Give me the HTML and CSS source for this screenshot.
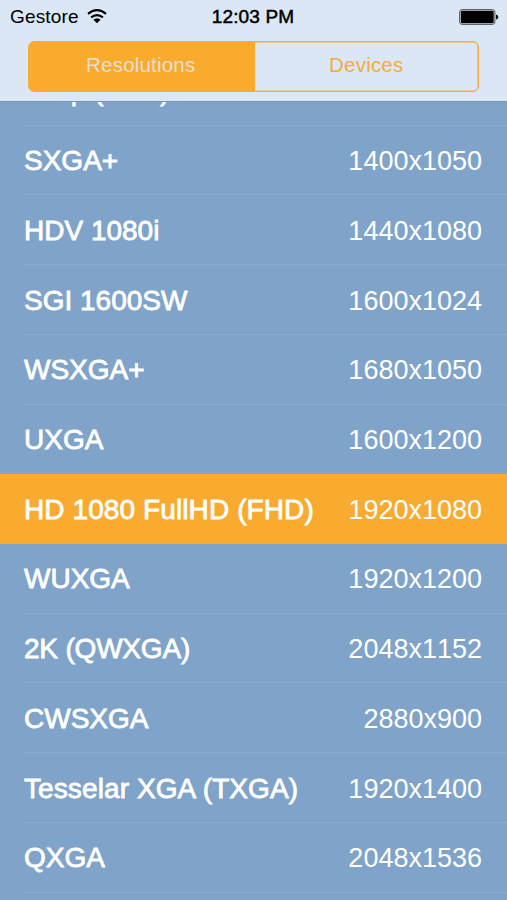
FILE: index.html
```html
<!DOCTYPE html>
<html lang="en">
<head>
<meta charset="utf-8">
<title>Resolutions</title>
<link rel="stylesheet" href="styles.css">
</head>
<body>
<div class="screen">
  <header class="header">
    <div class="status">
      <div class="carrier"><span>Gestore</span>
        <svg class="wifi" width="20" height="15" viewBox="0 0 20 15">
          <path d="M1 4.8Q10-2.4 19 4.8" fill="none" stroke="#000" stroke-width="2.2"/>
          <path d="M4.1 8.4Q10 3.8 15.9 8.4" fill="none" stroke="#000" stroke-width="2.2"/>
          <path d="M6.4 10.8Q10 7.6 13.6 10.8L10 14.2Z"/>
        </svg>
      </div>
      <div class="clock">12:03 PM</div>
      <svg class="battery" width="40" height="16" viewBox="0 0 40 16">
        <rect x=".6" y=".6" width="35.3" height="14.8" rx="2.5" fill="none" stroke="#4f5458" stroke-width="1"/>
        <rect x="1.8" y="1.8" width="32.9" height="12.4" rx="1.2"/>
        <path d="M37 5.5Q39.3 6 39.3 8Q39.3 10 37 10.5Z"/>
      </svg>
    </div>
    <nav class="tabs">
      <div class="tab active"><span>Resolutions</span></div>
      <div class="tab"><span>Devices</span></div>
    </nav>
  </header>
  <main class="viewport">
    <div class="list">
      <div class="row"><span class="name">900p (HD+)</span><span class="value">1600x900</span></div>
      <div class="row"><span class="name">SXGA+</span><span class="value">1400x1050</span></div>
      <div class="row"><span class="name">HDV 1080i</span><span class="value">1440x1080</span></div>
      <div class="row"><span class="name">SGI 1600SW</span><span class="value">1600x1024</span></div>
      <div class="row"><span class="name">WSXGA+</span><span class="value">1680x1050</span></div>
      <div class="row"><span class="name">UXGA</span><span class="value">1600x1200</span></div>
      <div class="row selected"><span class="name">HD 1080 FullHD (FHD)</span><span class="value">1920x1080</span></div>
      <div class="row"><span class="name">WUXGA</span><span class="value">1920x1200</span></div>
      <div class="row"><span class="name tight">2K (QWXGA)</span><span class="value">2048x1152</span></div>
      <div class="row"><span class="name">CWSXGA</span><span class="value">2880x900</span></div>
      <div class="row"><span class="name loose">Tesselar XGA (TXGA)</span><span class="value">1920x1400</span></div>
      <div class="row"><span class="name">QXGA</span><span class="value">2048x1536</span></div>
    </div>
  </main>
</div>
</body>
</html>
```
FILE: styles.css
```css
* { box-sizing: border-box; }
body {
  margin: 0;
  font-family: "Liberation Sans", Arial, sans-serif;
  background: #7fa3c9;
}
.screen {
  width: 507px;
  height: 900px;
  display: flex;
  flex-direction: column;
  overflow: hidden;
}
.header {
  flex: none;
  height: 102px;
  background: #dbe7f4;
  border-bottom: 1px solid #7594b6;
}
.status {
  display: grid;
  grid-template-columns: 1fr auto 1fr;
  align-items: center;
  height: 33px;
  padding: 0 8px 0 10px;
  font-size: 19px;
  color: #000;
}
.carrier { display: flex; align-items: center; gap: 8px; }
.carrier span { letter-spacing: .15px; }
.wifi { margin-top: -1px; }
.clock { -webkit-text-stroke: .5px #000; letter-spacing: .15px; margin-left: -3px; }
.battery { justify-self: end; }
.tabs {
  display: flex;
  width: 451px;
  height: 51px;
  margin: 8px 0 0 28px;
  border: 1px solid #f3ac40;
  border-radius: 6px;
  box-shadow: inset 0 0 0 .5px #f3ac40;
  overflow: hidden;
}
.tab {
  flex: 1;
  display: flex;
  align-items: center;
  justify-content: center;
  padding-bottom: 3px;
  font-size: 20.5px;
  letter-spacing: .2px;
  color: #f3ac40;
}
.active { background: #f9ab30; color: #eadfce; padding-right: 2px; }
.viewport { flex: 1; min-height: 0; overflow: hidden; }
.list { margin-top: -46px; }
.row {
  height: 69.73px;
  display: flex;
  align-items: center;
  justify-content: space-between;
  padding: 1px 25px 0 24px;
  color: #fff;
  background: linear-gradient(#8bacce, #8bacce) 24px 100% / 100% 1px no-repeat;
}
.row:has(+ .selected) { background: none; }
.row.selected { background: #f9ab30; }
.name { font-size: 28px; -webkit-text-stroke: .8px #fff; white-space: nowrap; }
.selected .name, .loose { letter-spacing: .1px; }
.tight { letter-spacing: -.2px; }
.value { font-size: 27px; font-kerning: none; padding-top: 1px; }
```
